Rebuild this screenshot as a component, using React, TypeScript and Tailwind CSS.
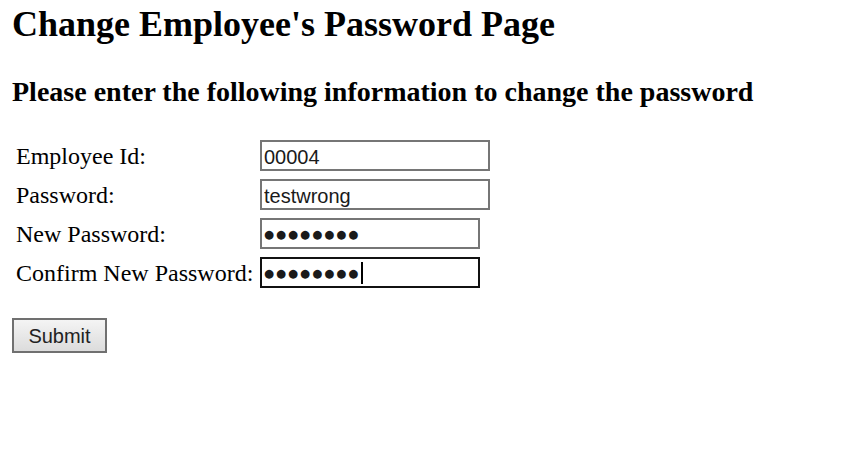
import React from "react";

const serif = { fontFamily: '"Liberation Serif", "Times New Roman", serif' };

function Field({ value, width, dots, focused }: { value: string; width: number; dots?: boolean; focused?: boolean }) {
  return (
    <div className="relative" style={{ width }}>
      <input
        readOnly
        value={value}
        className={
          "block h-[31px] w-full border-2 bg-white pl-[2px] pr-[2px] text-[#1a1a1a] outline-none " +
          (focused ? "border-[#111111]" : "border-[#767676]") +
          (dots ? " tracking-[2px]" : " pt-[3px] pb-0")
        }
        style={{
          fontFamily: dots ? '"DejaVu Sans", sans-serif' : '"Liberation Sans", Arial, sans-serif',
          fontSize: dots ? 11.5 : 20,
        }}
      />
      {focused && <span className="absolute left-[101px] top-[5px] h-[22px] w-[2px] bg-black" />}
    </div>
  );
}

export default function App() {
  const rows: { label: string; value: string; width: number; dots?: boolean; focused?: boolean }[] = [
    { label: "Employee Id:", value: "00004", width: 230 },
    { label: "Password:", value: "testwrong", width: 230 },
    { label: "New Password:", value: "●●●●●●●●", width: 220, dots: true },
    { label: "Confirm New Password:", value: "●●●●●●●●", width: 220, dots: true, focused: true },
  ];
  return (
    <div className="min-h-[472px] w-[848px] bg-white px-[12px] pt-[4px] text-black" style={serif}>
      <h1 className="m-0 text-[36px] font-bold leading-[41px]">Change Employee's Password Page</h1>
      <h2 className="mt-[31px] text-[28px] font-bold leading-[32px]">
        Please enter the following information to change the password
      </h2>
      <form className="mt-[32px]" onSubmit={(e) => e.preventDefault()}>
        <div className="flex flex-col gap-[8px]">
          {rows.map((r) => (
            <div key={r.label} className="flex items-center">
              <label className="w-[248px] pl-[4px] text-[24px] leading-[28px]">{r.label}</label>
              <Field value={r.value} width={r.width} dots={r.dots} focused={r.focused} />
            </div>
          ))}
        </div>
        <button
          type="submit"
          className="mt-[30px] flex h-[35px] w-[95px] items-center justify-center border-2 border-[#707070] bg-gradient-to-b from-[#f4f4f4] to-[#dcdcdc] text-[20px] text-[#222222]"
          style={{ fontFamily: '"Liberation Sans", Arial, sans-serif' }}
        >
          Submit
        </button>
      </form>
    </div>
  );
}
